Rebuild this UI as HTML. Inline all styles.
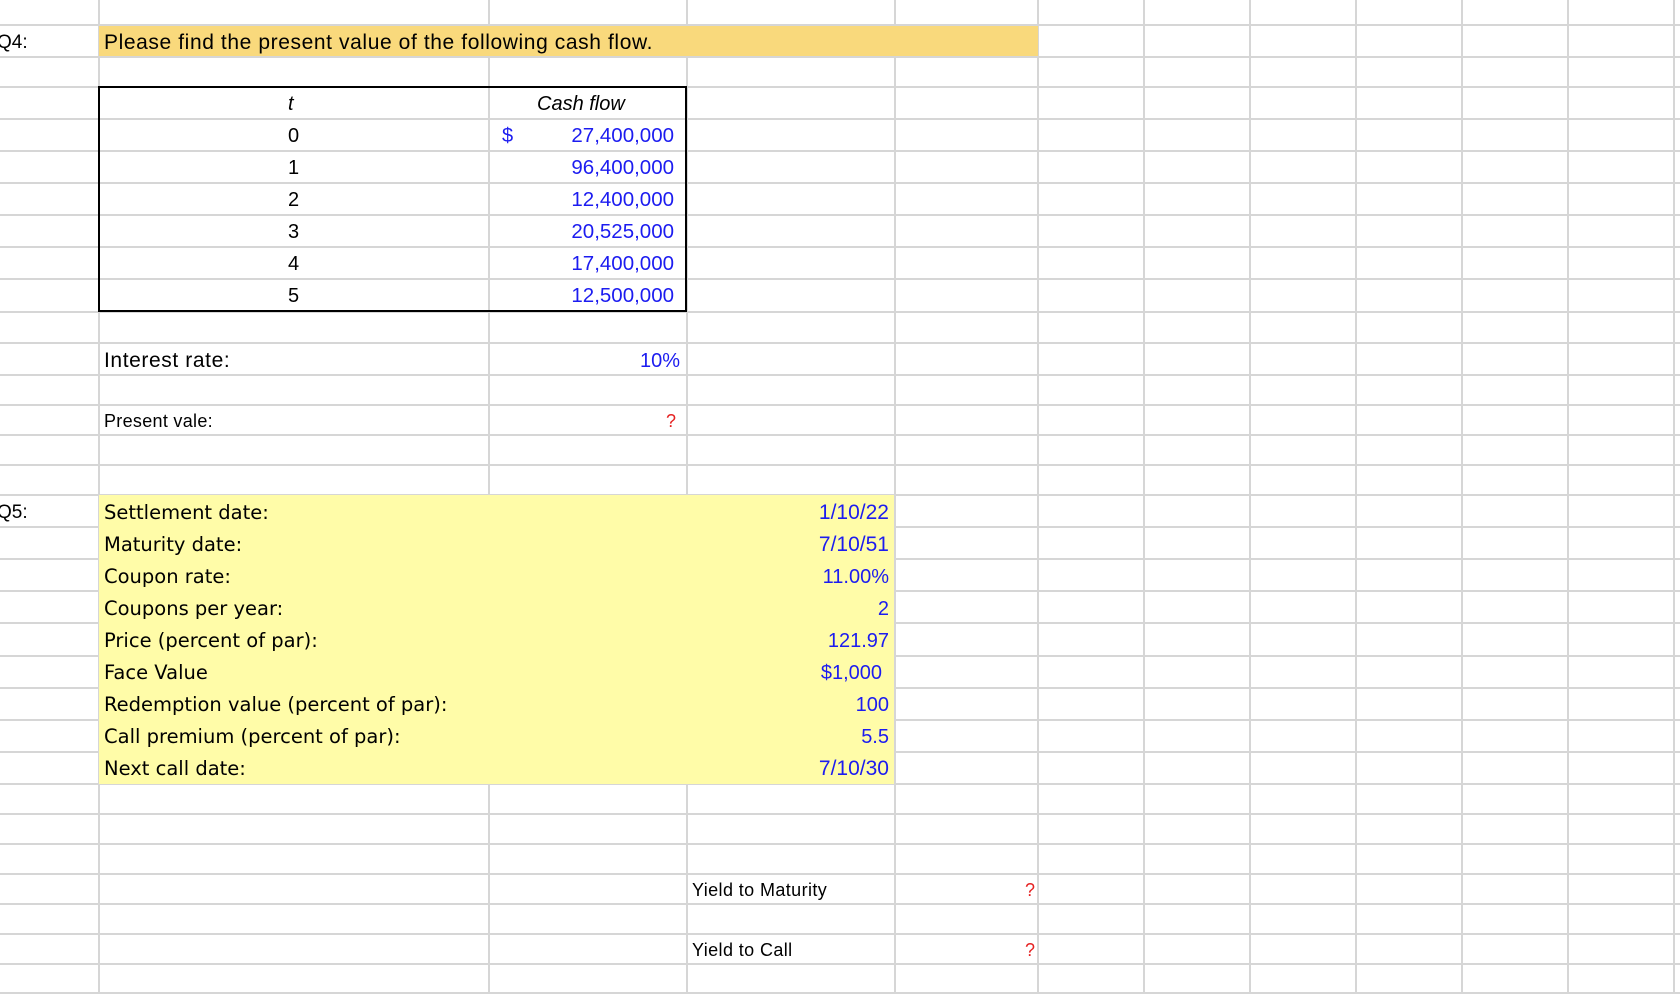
<!DOCTYPE html>
<html><head><meta charset="utf-8"><style>
body{margin:0;width:1680px;height:994px;overflow:hidden;background:#fff;position:relative;font-family:"Liberation Sans",sans-serif;}
.v{position:absolute;top:0;height:994px;width:2px;background:#d6d6d6}
.h{position:absolute;left:0;width:1680px;height:2px;background:#d6d6d6}
.t{position:absolute;white-space:nowrap;line-height:30px;color:#000}
.b{color:#1c1cf0}
.r{color:#e52222}
.q{font-family:"DejaVu Sans",sans-serif;font-size:19.5px}
</style></head><body>
<div class="v" style="left:98px"></div><div class="v" style="left:488px"></div><div class="v" style="left:686px"></div><div class="v" style="left:894px"></div><div class="v" style="left:1037px"></div><div class="v" style="left:1143px"></div><div class="v" style="left:1249px"></div><div class="v" style="left:1355px"></div><div class="v" style="left:1461px"></div><div class="v" style="left:1567px"></div><div class="v" style="left:1673px"></div>
<div class="h" style="top:24px"></div><div class="h" style="top:56px"></div><div class="h" style="top:86px"></div><div class="h" style="top:118px"></div><div class="h" style="top:150px"></div><div class="h" style="top:182px"></div><div class="h" style="top:214px"></div><div class="h" style="top:246px"></div><div class="h" style="top:278px"></div><div class="h" style="top:311px"></div><div class="h" style="top:342px"></div><div class="h" style="top:374px"></div><div class="h" style="top:404px"></div><div class="h" style="top:434px"></div><div class="h" style="top:464px"></div><div class="h" style="top:494px"></div><div class="h" style="top:526px"></div><div class="h" style="top:558px"></div><div class="h" style="top:590px"></div><div class="h" style="top:622px"></div><div class="h" style="top:655px"></div><div class="h" style="top:687px"></div><div class="h" style="top:719px"></div><div class="h" style="top:751px"></div><div class="h" style="top:783px"></div><div class="h" style="top:813px"></div><div class="h" style="top:843px"></div><div class="h" style="top:873px"></div><div class="h" style="top:903px"></div><div class="h" style="top:933px"></div><div class="h" style="top:963px"></div><div class="h" style="top:992px"></div>
<div style="position:absolute;left:99px;top:26px;width:939px;height:30px;background:#f9d97c"></div>
<div style="position:absolute;left:99px;top:495px;width:795px;height:289px;background:#fffca8"></div>
<div style="position:absolute;left:98px;top:86px;width:585px;height:222px;border:2px solid #000"></div>

<div class="t" style="left:-3px;top:28px;font-size:19px">Q4:</div>
<div class="t" style="left:104px;top:28px;font-size:21px;letter-spacing:0.6px">Please find the present value of the following cash flow.</div>

<div class="t" style="left:288px;top:89px;font-size:20px;font-style:italic">t</div>
<div class="t" style="left:537px;top:89px;font-size:20px;font-style:italic">Cash flow</div>
<div class="t b" style="left:502px;top:121px;font-size:20px">$</div>
<div class="t" style="left:288px;top:121px;font-size:20px">0</div>
<div class="t" style="left:288px;top:153px;font-size:20px">1</div>
<div class="t" style="left:288px;top:185px;font-size:20px">2</div>
<div class="t" style="left:288px;top:217px;font-size:20px">3</div>
<div class="t" style="left:288px;top:249px;font-size:20px">4</div>
<div class="t" style="left:288px;top:281px;font-size:20px">5</div>
<div class="t b" style="right:1006px;top:121px;font-size:20.5px">27,400,000</div>
<div class="t b" style="right:1006px;top:153px;font-size:20.5px">96,400,000</div>
<div class="t b" style="right:1006px;top:185px;font-size:20.5px">12,400,000</div>
<div class="t b" style="right:1006px;top:217px;font-size:20.5px">20,525,000</div>
<div class="t b" style="right:1006px;top:249px;font-size:20.5px">17,400,000</div>
<div class="t b" style="right:1006px;top:281px;font-size:20.5px">12,500,000</div>

<div class="t" style="left:104px;top:346px;font-size:21px;letter-spacing:0.6px">Interest rate:</div>
<div class="t b" style="right:1000px;top:346px;font-size:20px">10%</div>
<div class="t" style="left:104px;top:406px;font-size:18px;letter-spacing:0.3px">Present vale:</div>
<div class="t r" style="right:1004px;top:406px;font-size:18px">?</div>

<div class="t" style="left:-3px;top:498px;font-size:19px">Q5:</div>
<div class="t q" style="left:104px;top:498px">Settlement date:</div>
<div class="t q" style="left:104px;top:530px">Maturity date:</div>
<div class="t q" style="left:104px;top:562px">Coupon rate:</div>
<div class="t q" style="left:104px;top:594px">Coupons per year:</div>
<div class="t q" style="left:104px;top:626px">Price (percent of par):</div>
<div class="t q" style="left:104px;top:658px">Face Value</div>
<div class="t q" style="left:104px;top:690px">Redemption value (percent of par):</div>
<div class="t q" style="left:104px;top:722px">Call premium (percent of par):</div>
<div class="t q" style="left:104px;top:754px">Next call date:</div>
<div class="t b" style="right:791px;top:498px;font-size:21px">1/10/22</div>
<div class="t b" style="right:791px;top:530px;font-size:21px">7/10/51</div>
<div class="t b" style="right:791px;top:562px;font-size:20px">11.00%</div>
<div class="t b" style="right:791px;top:594px;font-size:20px">2</div>
<div class="t b" style="right:791px;top:626px;font-size:20px">121.97</div>
<div class="t b" style="right:798px;top:658px;font-size:20px">$1,000</div>
<div class="t b" style="right:791px;top:690px;font-size:20px">100</div>
<div class="t b" style="right:791px;top:722px;font-size:20px">5.5</div>
<div class="t b" style="right:791px;top:754px;font-size:21px">7/10/30</div>

<div class="t" style="left:692px;top:875px;font-size:18px;letter-spacing:0.4px">Yield to Maturity</div>
<div class="t r" style="right:645px;top:875px;font-size:18px">?</div>
<div class="t" style="left:692px;top:935px;font-size:18px;letter-spacing:0.4px">Yield to Call</div>
<div class="t r" style="right:645px;top:935px;font-size:18px">?</div>
</body></html>
